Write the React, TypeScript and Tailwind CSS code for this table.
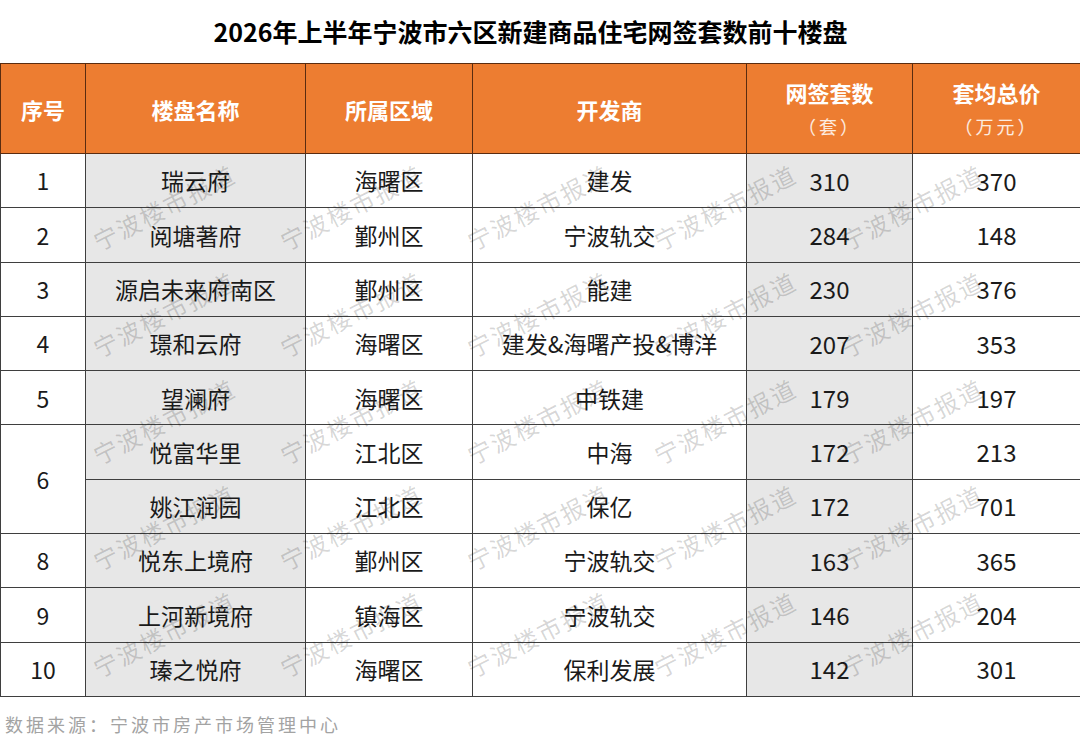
import type { ReactNode } from 'react';

type Row = {
  rank?: string;
  span?: number;
  name: string;
  area: string;
  dev: string;
  count: string;
  price: string;
};

const rows: Row[] = [
  { rank: '1', name: '瑞云府', area: '海曙区', dev: '建发', count: '310', price: '370' },
  { rank: '2', name: '阅塘著府', area: '鄞州区', dev: '宁波轨交', count: '284', price: '148' },
  { rank: '3', name: '源启未来府南区', area: '鄞州区', dev: '能建', count: '230', price: '376' },
  { rank: '4', name: '璟和云府', area: '海曙区', dev: '建发&海曙产投&博洋', count: '207', price: '353' },
  { rank: '5', name: '望澜府', area: '海曙区', dev: '中铁建', count: '179', price: '197' },
  { rank: '6', span: 2, name: '悦富华里', area: '江北区', dev: '中海', count: '172', price: '213' },
  { name: '姚江润园', area: '江北区', dev: '保亿', count: '172', price: '701' },
  { rank: '8', name: '悦东上境府', area: '鄞州区', dev: '宁波轨交', count: '163', price: '365' },
  { rank: '9', name: '上河新境府', area: '镇海区', dev: '宁波轨交', count: '146', price: '204' },
  { rank: '10', name: '瑧之悦府', area: '海曙区', dev: '保利发展', count: '142', price: '301' },
];

// watermark grid (bottom-left anchor of each stamp)
const markCols = [101, 288, 475, 662, 849];
const markRows = [255, 362, 469, 575, 682];

function Th({ children }: { children: ReactNode }) {
  return (
    <th className="border border-[#5a2c10] px-1 text-center align-middle font-bold text-white">
      {children}
    </th>
  );
}

function Td({ children, gray, rowSpan }: { children: ReactNode; gray?: boolean; rowSpan?: number }) {
  return (
    <td
      rowSpan={rowSpan}
      className={`border border-[#3f3f3f] px-1 text-center align-middle whitespace-nowrap ${gray ? 'bg-[#e7e7e7]' : 'bg-white'}`}
    >
      {children}
    </td>
  );
}

export default function App() {
  return (
    <div className="relative w-[1080px] h-[751px] overflow-hidden bg-white text-[#1a1a1a] font-['Noto_Sans_CJK_SC','Noto_Sans',sans-serif]">
      <h1 className="flex h-[63px] items-center justify-center pr-[19px] text-[25px] font-bold text-black">
        2026年上半年宁波市六区新建商品住宅网签套数前十楼盘
      </h1>

      <table className="w-[1080px] table-fixed border-collapse">
        <colgroup>
          <col className="w-[85px]" />
          <col className="w-[220px]" />
          <col className="w-[167px]" />
          <col className="w-[274px]" />
          <col className="w-[166px]" />
          <col className="w-[168px]" />
        </colgroup>
        <thead>
          <tr className="h-[90px] bg-[#ed7d31] text-[22px] leading-[34px]">
            <Th>序号</Th>
            <Th>楼盘名称</Th>
            <Th>所属区域</Th>
            <Th>开发商</Th>
            <Th>
              <div>网签套数</div>
              <div className="text-[18px] font-normal tracking-[3px] text-white/85">（套）</div>
            </Th>
            <Th>
              <div>套均总价</div>
              <div className="text-[18px] font-normal tracking-[3px] text-white/85">（万元）</div>
            </Th>
          </tr>
        </thead>
        <tbody className="text-[23px]">
          {rows.map((r, i) => (
            <tr key={i} className="h-[54.3px]">
              {r.rank && <Td rowSpan={r.span}>{r.rank}</Td>}
              <Td gray>{r.name}</Td>
              <Td>{r.area}</Td>
              <Td>{r.dev}</Td>
              <Td gray>
                <span className="text-[24px]">{r.count}</span>
              </Td>
              <Td>
                <span className="text-[24px]">{r.price}</span>
              </Td>
            </tr>
          ))}
        </tbody>
      </table>

      <p className="flex h-[55px] items-center pl-[5px] text-[18px] tracking-[3px] text-[#a3a3a3]">
        数据来源：宁波市房产市场管理中心
      </p>

      {/* watermark stamps over the table */}
      <div className="pointer-events-none absolute inset-0">
        {markRows.map((y) =>
          markCols.map((x) => (
            <span
              key={`${x}-${y}`}
              className="absolute origin-bottom-left -rotate-[27deg] whitespace-nowrap text-[24px] leading-[28px] tracking-[2px] text-black/[0.17]"
              style={{ left: x, top: y - 28 }}
            >
              宁波楼市报道
            </span>
          )),
        )}
      </div>
    </div>
  );
}
